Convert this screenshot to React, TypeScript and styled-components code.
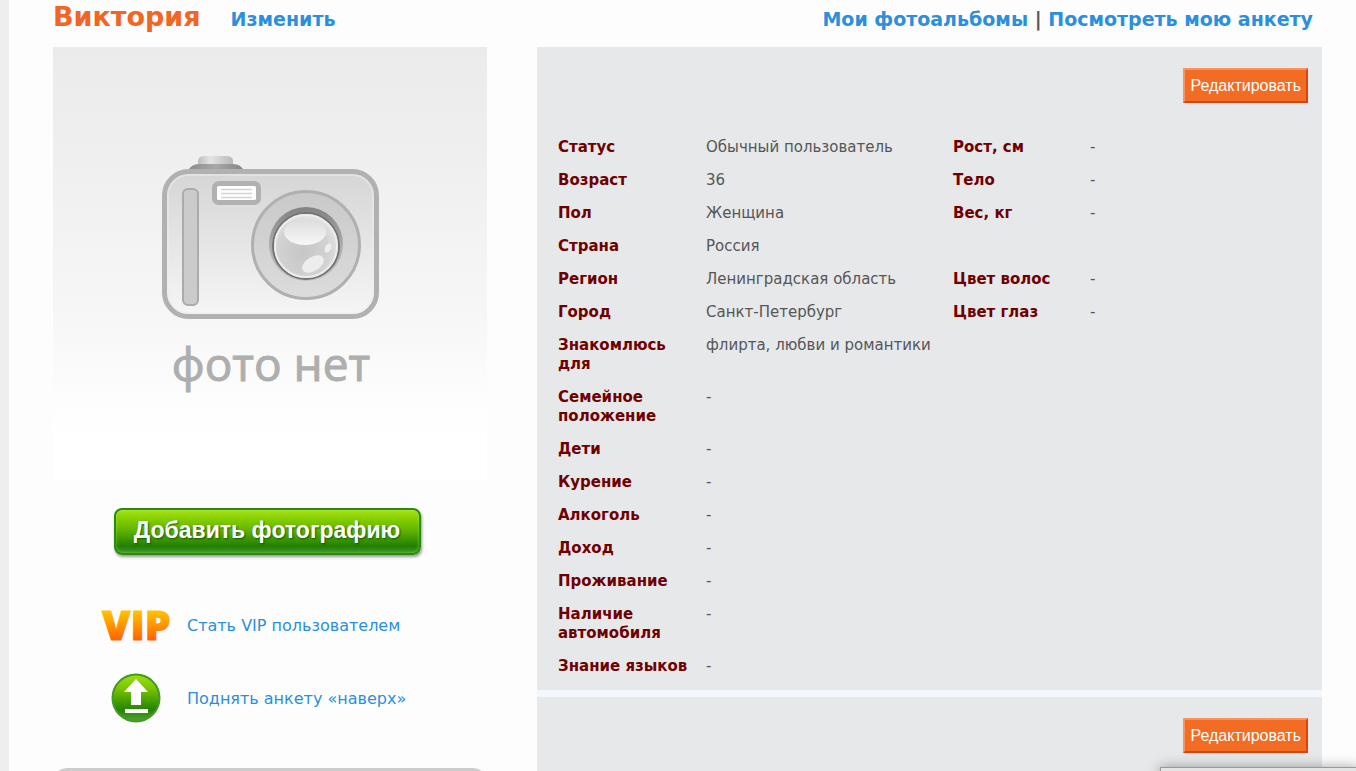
import React from "react";
import styled, { createGlobalStyle } from "styled-components";

const GlobalStyle = createGlobalStyle`
  *, *::before, *::after { box-sizing: border-box; }
  body {
    margin: 0;
    background: #eeeeee;
    color: #565656;
    font-family: Verdana, "DejaVu Sans", sans-serif;
    font-size: 15px;
    line-height: 19px;
  }
`;

const Page = styled.div`
  height: 100vh;
  overflow: hidden;
  margin-left: 9px;
  padding: 0 34px 0 44px;
  background: #fdfdfd;
`;

const Header = styled.header`
  display: flex;
  align-items: baseline;
  gap: 30px;
  height: 47px;
  font-size: 19px;
  font-weight: bold;
  line-height: 34px;
`;

const UserName = styled.h1`
  margin: 0;
  color: #f26522;
  font-size: 27px;
  line-height: 34px;
`;

const Link = styled.a`
  color: #2b8fdd;
  text-decoration: none;
`;

const HeaderNav = styled.nav`
  margin-left: auto;
  padding-right: 9px;
`;

const Columns = styled.div`
  display: grid;
  grid-template-columns: 434px minmax(0, 1fr);
  column-gap: 50px;
`;

const Sidebar = styled.aside`
  display: flex;
  flex-direction: column;
`;

const Photo = styled.svg`
  display: block;
  width: 434px;
  height: 433px;
`;

const AddPhotoButton = styled.button`
  align-self: center;
  width: 307px;
  height: 47px;
  margin: 28px 6px 0 0;
  padding: 0 0 2px;
  border: 2px solid #2b8a10;
  border-radius: 8px;
  background: linear-gradient(#a4e01c, #86d000 20%, #5cb000 50%, #218003 84%, #42962c);
  box-shadow: 1px 2px 3px rgba(0, 0, 0, 0.4), inset 0 0 3px rgba(190, 255, 90, 0.5);
  color: #ffffff;
  font: bold 23px "Liberation Sans", Arial, sans-serif;
  text-shadow: 1px 1px 2px rgba(0, 60, 0, 0.7);
  white-space: nowrap;
`;

const ActionList = styled.ul`
  display: grid;
  gap: 22px;
  margin: 45px 0 0;
  padding: 0 0 0 48px;
  list-style: none;
`;

const Action = styled.li`
  display: grid;
  grid-template-columns: 70px 1fr;
  align-items: center;
  column-gap: 16px;
  height: 51px;
  font-size: 16px;
`;

const ActionIcon = styled.svg`
  display: block;
  justify-self: center;
  overflow: visible;
`;

const SideBlock = styled.section`
  height: 60px;
  margin-top: 44px;
  border-radius: 14px 14px 0 0;
  background: #cccccc;
`;

const Main = styled.main`
  display: grid;
  align-content: start;
  row-gap: 7px;
  background: #f2f8fe;
`;

const Panel = styled.section`
  min-height: 120px;
  padding: 21px 14px 7px 21px;
  background: #e6e8ea;
`;

const PanelTools = styled.div`
  display: flex;
  justify-content: flex-end;
`;

const EditButton = styled.button`
  height: 35px;
  padding: 0 5px;
  border: 2px solid;
  border-color: #f9945f #dd430c #dd430c #f9945f;
  background: #f26c23;
  color: #ffffff;
  font: 16px "Liberation Sans", Arial, sans-serif;
`;

const Facts = styled.table`
  width: 100%;
  margin-top: 28px;
  border-collapse: collapse;
  table-layout: fixed;
`;

const Col = styled.col<{ $width?: number }>`
  width: ${(p) => (p.$width ? `${p.$width}px` : "auto")};
`;

const Label = styled.th`
  padding: 7px 16px 7px 0;
  color: #700000;
  font-weight: bold;
  text-align: left;
  vertical-align: top;
  white-space: pre-line;
`;

const Value = styled.td`
  padding: 7px 0;
  vertical-align: top;
`;

const CornerPopup = styled.div`
  position: fixed;
  right: -4px;
  bottom: -36px;
  width: 200px;
  height: 40px;
  border: 1px solid #9a9a9a;
  background: #e4e4e4;
  box-shadow: 0 0 12px rgba(0, 0, 0, 0.35);
`;

const facts: string[][] = [
  ["Статус", "Обычный пользователь", "Рост, см", "-"],
  ["Возраст", "36", "Тело", "-"],
  ["Пол", "Женщина", "Вес, кг", "-"],
  ["Страна", "Россия"],
  ["Регион", "Ленинградская область", "Цвет волос", "-"],
  ["Город", "Санкт-Петербург", "Цвет глаз", "-"],
  ["Знакомлюсь\nдля", "флирта, любви и романтики"],
  ["Семейное\nположение", "-"],
  ["Дети", "-"],
  ["Курение", "-"],
  ["Алкоголь", "-"],
  ["Доход", "-"],
  ["Проживание", "-"],
  ["Наличие\nавтомобиля", "-"],
  ["Знание языков", "-"],
];

function NoPhoto() {
  return (
    <Photo viewBox="0 0 434 433" role="img" aria-label="фото нет">
      <defs>
        <linearGradient id="backdrop" x1="0" y1="0" x2="0" y2="1">
          <stop offset="0" stopColor="#ebebeb" />
          <stop offset="0.25" stopColor="#efefef" />
          <stop offset="0.6" stopColor="#f6f6f6" />
          <stop offset="0.82" stopColor="#fdfdfd" />
          <stop offset="0.9" stopColor="#ffffff" />
        </linearGradient>
        <linearGradient id="shell" x1="0" y1="0" x2="0" y2="1">
          <stop offset="0" stopColor="#d5d5d5" />
          <stop offset="1" stopColor="#f6f6f6" />
        </linearGradient>
        <linearGradient id="knob" x1="0" y1="0" x2="1" y2="0">
          <stop offset="0" stopColor="#bdbdbd" />
          <stop offset="0.35" stopColor="#e4e4e4" />
          <stop offset="1" stopColor="#b8b8b8" />
        </linearGradient>
        <linearGradient id="knobBase" x1="0" y1="0" x2="1" y2="0">
          <stop offset="0" stopColor="#8c8c8c" />
          <stop offset="0.5" stopColor="#a8a8a8" />
          <stop offset="1" stopColor="#858585" />
        </linearGradient>
        <linearGradient id="ring" x1="0" y1="0" x2="0" y2="1">
          <stop offset="0" stopColor="#c9c9c9" />
          <stop offset="1" stopColor="#dcdcdc" />
        </linearGradient>
        <linearGradient id="rim" x1="0" y1="0" x2="0" y2="1">
          <stop offset="0" stopColor="#828282" />
          <stop offset="0.5" stopColor="#aaaaaa" />
          <stop offset="1" stopColor="#c4c4c4" />
        </linearGradient>
        <radialGradient id="glass" cx="0.45" cy="0.6" r="0.6">
          <stop offset="0" stopColor="#c6c6c6" />
          <stop offset="0.65" stopColor="#d2d2d2" />
          <stop offset="1" stopColor="#e6e6e6" />
        </radialGradient>
        <linearGradient id="shine" x1="0" y1="0" x2="0" y2="1">
          <stop offset="0" stopColor="#dcdcdc" />
          <stop offset="1" stopColor="#f8f8f8" />
        </linearGradient>
      </defs>
      <rect width="434" height="433" fill="url(#backdrop)" />
      <path d="M145 118v-4q0-5 7-5h21q7 0 7 5v4z" fill="url(#knob)" />
      <path d="M135 124q3-7 11-7h34q8 0 11 7z" fill="url(#knobBase)" />
      <rect x="111.500" y="124.500" width="212" height="145" rx="24" fill="url(#shell)" stroke="#b1b1b1" strokeWidth="5" />
      <rect x="115" y="128" width="205" height="138" rx="21" fill="none" stroke="#eeeeee" strokeOpacity="0.5" strokeWidth="2" />
      <rect x="130" y="142" width="15" height="116" rx="5" fill="#cbcbcb" stroke="#ababab" strokeWidth="2" />
      <rect x="161.500" y="136.500" width="44" height="19" rx="4" fill="#ffffff" stroke="#b1b1b1" strokeWidth="5" />
      <path d="M168 142.500h31M168 146.500h31M168 150.500h31" stroke="#d4d4d4" strokeWidth="1.500" />
      <circle cx="253" cy="198" r="53.500" fill="url(#ring)" stroke="#b0b0b0" strokeWidth="3" />
      <circle cx="253" cy="197" r="37" fill="url(#rim)" />
      <circle cx="253" cy="199" r="33" fill="url(#glass)" stroke="#747474" strokeWidth="2" />
      <circle cx="253" cy="199" r="31" fill="none" stroke="#ececec" strokeWidth="2" />
      <ellipse cx="252" cy="185" rx="21" ry="13" fill="url(#shine)" />
      <ellipse cx="260" cy="217" rx="12" ry="7" transform="rotate(-32 260 217)" fill="#ededed" />
      <ellipse cx="275" cy="201" rx="3" ry="5" transform="rotate(25 275 201)" fill="#ededed" />
      <text x="218" y="334" textAnchor="middle" fill="#aeaeae" stroke="#aeaeae" strokeWidth="1" fontFamily="'Open Sans', 'Noto Sans', sans-serif" fontSize="46">
        фото нет
      </text>
    </Photo>
  );
}

function VipIcon() {
  return (
    <ActionIcon width="70" height="50" viewBox="0 0 70 50" aria-hidden="true">
      <defs>
        <linearGradient id="gold" gradientUnits="userSpaceOnUse" x1="0" y1="10" x2="0" y2="39">
          <stop offset="0" stopColor="#ffc400" />
          <stop offset="1" stopColor="#ff6200" />
        </linearGradient>
      </defs>
      <text x="1" y="39" fill="url(#gold)" stroke="url(#gold)" strokeWidth="1" fontFamily="'Open Sans', sans-serif" fontWeight="800" fontSize="41">
        VIP
      </text>
    </ActionIcon>
  );
}

function RaiseIcon() {
  return (
    <ActionIcon width="50" height="50" viewBox="0 0 50 50" aria-hidden="true">
      <defs>
        <linearGradient id="leaf" x1="0" y1="0" x2="0" y2="1">
          <stop offset="0" stopColor="#a0e014" />
          <stop offset="0.3" stopColor="#78c400" />
          <stop offset="0.75" stopColor="#248404" />
          <stop offset="1" stopColor="#53a32f" />
        </linearGradient>
      </defs>
      <circle cx="25" cy="24" r="23.500" fill="url(#leaf)" stroke="#429c22" strokeWidth="2" />
      <path d="M25 5l12 13h-7v13h-10v-13h-7z" fill="#ffffff" />
      <path d="M14 35h23v4h-23z" fill="#ffffff" />
    </ActionIcon>
  );
}

export default function App() {
  return (
    <>
      <GlobalStyle />
      <Page>
        <Header>
          <UserName>Виктория</UserName>
          <Link href="#rename">Изменить</Link>
          <HeaderNav>
            <Link href="#albums">Мои фотоальбомы</Link> | <Link href="#profile">Посмотреть мою анкету</Link>
          </HeaderNav>
        </Header>
        <Columns>
          <Sidebar>
            <NoPhoto />
            <AddPhotoButton type="button">Добавить фотографию</AddPhotoButton>
            <ActionList>
              <Action>
                <VipIcon />
                <Link href="#vip">Стать VIP пользователем</Link>
              </Action>
              <Action>
                <RaiseIcon />
                <Link href="#raise">Поднять анкету «наверх»</Link>
              </Action>
            </ActionList>
            <SideBlock />
          </Sidebar>
          <Main>
            <Panel>
              <PanelTools>
                <EditButton type="button">Редактировать</EditButton>
              </PanelTools>
              <Facts>
                <colgroup>
                  <Col $width={148} />
                  <Col $width={247} />
                  <Col $width={137} />
                  <Col />
                </colgroup>
                <tbody>
                  {facts.map(([label, value, label2, value2]) => (
                    <tr key={label}>
                      <Label scope="row">{label}</Label>
                      <Value>{value}</Value>
                      {label2 && <Label scope="row">{label2}</Label>}
                      {value2 && <Value>{value2}</Value>}
                    </tr>
                  ))}
                </tbody>
              </Facts>
            </Panel>
            <Panel>
              <PanelTools>
                <EditButton type="button">Редактировать</EditButton>
              </PanelTools>
            </Panel>
          </Main>
        </Columns>
      </Page>
      <CornerPopup />
    </>
  );
}
